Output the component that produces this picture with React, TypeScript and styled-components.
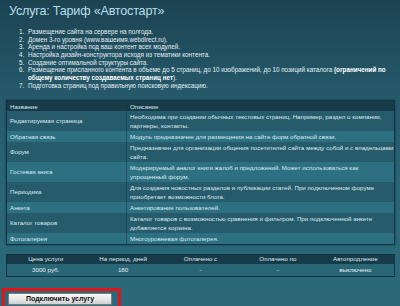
import React from "react";
import styled, { createGlobalStyle } from "styled-components";

const GlobalStyle = createGlobalStyle`
  html, body {
    margin: 0;
    padding: 0;
  }
  body {
    width: 400px;
    height: 306px;
    overflow: hidden;
    background: linear-gradient(180deg, #1c4352 0%, #25596a 30%, #2a6676 60%, #2b6979 100%);
    font-family: "Liberation Sans", Arial, sans-serif;
    color: #dbe9ee;
  }
`;

interface Module {
  name: string;
  lines: string[];
}

const modules: Module[] = [
  {
    name: "Редактируемая страница",
    lines: [
      "Необходима при создании обычных текстовых страниц. Например, раздел о компании,",
      "партнеры, контакты.",
    ],
  },
  { name: "Обратная связь", lines: ["Модуль предназначен для размещения на сайте форм обратной связи."] },
  {
    name: "Форум",
    lines: [
      "Предназначен для организации общения посетителей сайта между собой и с владельцами",
      "сайта.",
    ],
  },
  {
    name: "Гостевая книга",
    lines: ["Модерируемый аналог книги жалоб и предложений. Может использоваться как", "упрощенный форум."],
  },
  {
    name: "Периодика",
    lines: [
      "Для создания новостных разделов и публикации статей. При подключенном форуме",
      "приобретает возможности блога.",
    ],
  },
  { name: "Анкета", lines: ["Анкетирование пользователей."] },
  {
    name: "Каталог товаров",
    lines: [
      "Каталог товаров с возможностью сравнения и фильтром. При подключенной анкете",
      "добавляется корзина.",
    ],
  },
  { name: "Фотогалерея", lines: ["Многоуровневая фотогалерея."] },
];

const priceHead = ["Цена услуги", "На период, дней", "Оплачено с", "Оплачено по", "Автопродление"];
const priceRow = ["3000 руб.", "180", "-", "-", "выключено"];

const Page = styled.div`
  display: flex;
  flex-direction: column;
  padding: 3px 5px 0 6px;
`;

const Title = styled.h1`
  margin: 0 0 0 3px;
  font-size: 12.6px;
  line-height: 16px;
  font-weight: normal;
  letter-spacing: -0.2px;
  color: #b9dde9;
`;

const List = styled.ol`
  margin: 9px 0 0;
  padding: 0 0 0 20px;
  font-size: 6.3px;
  line-height: 7.65px;
  color: #e3eef2;
  white-space: nowrap;
`;

const Item = styled.li`
  padding-left: 2px;
`;

const Strong = styled.b`
  font-weight: bold;
  color: #ffffff;
`;

const Table = styled.div`
  margin-top: 11px;
  display: grid;
  grid-template-columns: 119px 1fr;
  border: 1px solid #143340;
  box-shadow: 0 0 2px rgba(10, 30, 40, 0.6);
  font-size: 6.2px;
  line-height: 9px;
`;

const Cell = styled.div<{ $tone: "head" | "dark" | "light" }>`
  padding: 1px 2px 1px 3px;
  white-space: nowrap;
  overflow: hidden;
  background: ${({ $tone }) =>
    $tone === "head" ? "#173b48" : $tone === "dark" ? "#255b6b" : "#2c7082"};
  border-left: 1px solid rgba(20, 50, 60, 0.5);
  &:nth-child(2n + 1) {
    border-left: none;
  }
  ${({ $tone }) => ($tone === "head" ? "padding-top: 0.5px; padding-bottom: 0;" : "")}
`;

const NameCell = styled(Cell)`
  display: flex;
  align-items: center;
`;

const PriceTable = styled.div`
  margin-top: 9px;
  display: grid;
  grid-template-columns: repeat(5, 1fr);
  border: 1px solid #143340;
  font-size: 6.2px;
  line-height: 8px;
  text-align: center;
`;

const PriceHead = styled.div`
  background: #173b48;
  padding: 0 0 1px;
`;

const PriceCell = styled.div`
  background: #296676;
  padding: 2px 0;
  color: #e3eef2;
`;

const Highlight = styled.div`
  margin: 11px 0 0 -4px;
  width: 109px;
  padding: 2px;
  border: 3px solid #e3151a;
  height: 12px;
`;

const Button = styled.button`
  display: block;
  width: 104px;
  height: 12px;
  padding: 0;
  margin: 0 0 0 1px;
  border: 1px solid #7d7d7d;
  border-radius: 1px;
  background: linear-gradient(180deg, #fafafa 0%, #e6e6e6 55%, #cfcfcf 100%);
  font-family: "Liberation Sans", Arial, sans-serif;
  font-size: 7px;
  line-height: 10px;
  font-weight: bold;
  color: #111;
  cursor: pointer;
`;

export default function App() {
  return (
    <>
      <GlobalStyle />
      <Page>
        <Title>Услуга: Тариф «Автостарт»</Title>
        <List>
          <Item>Размещение сайта на сервере на полгода.</Item>
          <Item>Домен 3-го уровня (www.вашеимя.webdirect.ru).</Item>
          <Item>Аренда и настройка под ваш контент всех модулей.</Item>
          <Item>Настройка дизайн-конструктора исходя из тематики контента.</Item>
          <Item>Создание оптимальной структуры сайта.</Item>
          <Item>
            Размещение присланного контента в объеме до 5 страниц, до 10 изображений, до 10 позиций
            каталога{" "}
            <Strong>
              (ограничений по
              <br />
              общему количеству создаваемых страниц нет
            </Strong>
            ).
          </Item>
          <Item>Подготовка страниц под правильную поисковую индексацию.</Item>
        </List>
        <Table>
          <Cell $tone="head">Название</Cell>
          <Cell $tone="head">Описание</Cell>
          {modules.map((m, i) => {
            const tone = i % 2 === 0 ? "dark" : "light";
            return (
              <React.Fragment key={m.name}>
                <NameCell $tone={tone}>{m.name}</NameCell>
                <Cell $tone={tone}>
                  {m.lines.map((line, j) => (
                    <div key={j}>{line}</div>
                  ))}
                </Cell>
              </React.Fragment>
            );
          })}
        </Table>
        <PriceTable>
          {priceHead.map((h) => (
            <PriceHead key={h}>{h}</PriceHead>
          ))}
          {priceRow.map((v, i) => (
            <PriceCell key={i}>{v}</PriceCell>
          ))}
        </PriceTable>
        <Highlight>
          <Button>Подключить услугу</Button>
        </Highlight>
      </Page>
    </>
  );
}
